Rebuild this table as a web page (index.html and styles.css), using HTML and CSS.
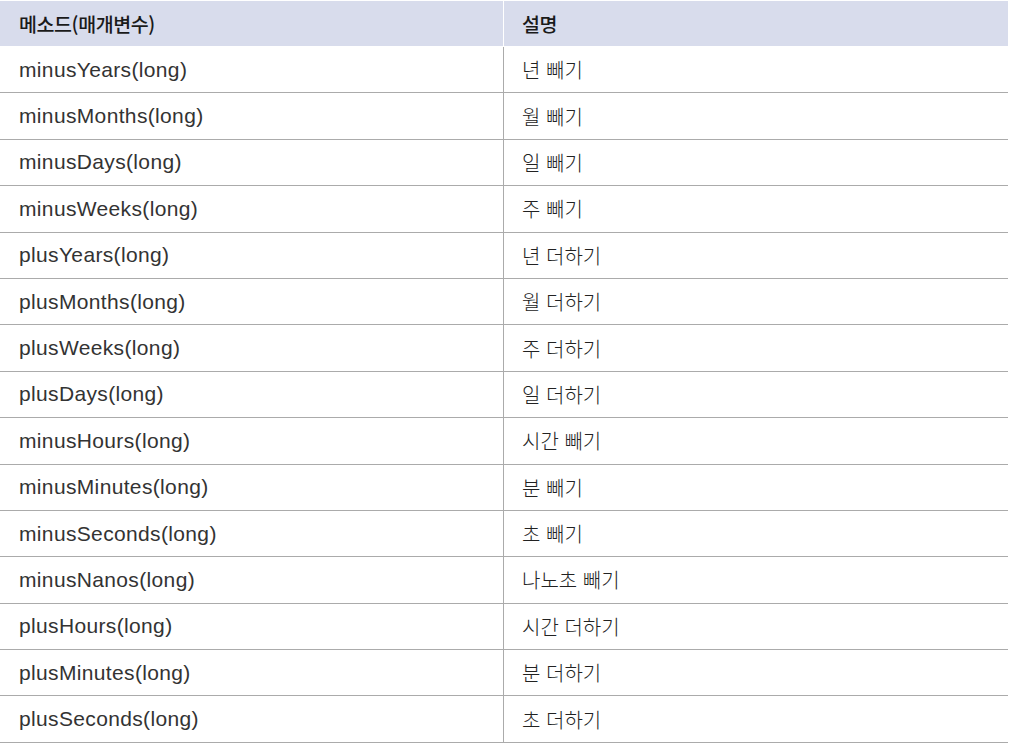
FILE: index.html
```html
<!DOCTYPE html>
<html lang="ko">
<head>
<meta charset="utf-8">
<link rel="stylesheet" href="styles.css">
</head>
<body>
<div class="table">
  <div class="row head"><div class="cell c1">메소드(매개변수)</div><div class="cell c2">설명</div></div>
  <div class="row"><div class="cell c1">minusYears(long)</div><div class="cell c2">년 빼기</div></div>
  <div class="row"><div class="cell c1">minusMonths(long)</div><div class="cell c2">월 빼기</div></div>
  <div class="row"><div class="cell c1">minusDays(long)</div><div class="cell c2">일 빼기</div></div>
  <div class="row"><div class="cell c1">minusWeeks(long)</div><div class="cell c2">주 빼기</div></div>
  <div class="row"><div class="cell c1">plusYears(long)</div><div class="cell c2">년 더하기</div></div>
  <div class="row"><div class="cell c1">plusMonths(long)</div><div class="cell c2">월 더하기</div></div>
  <div class="row"><div class="cell c1">plusWeeks(long)</div><div class="cell c2">주 더하기</div></div>
  <div class="row"><div class="cell c1">plusDays(long)</div><div class="cell c2">일 더하기</div></div>
  <div class="row"><div class="cell c1">minusHours(long)</div><div class="cell c2">시간 빼기</div></div>
  <div class="row"><div class="cell c1">minusMinutes(long)</div><div class="cell c2">분 빼기</div></div>
  <div class="row"><div class="cell c1">minusSeconds(long)</div><div class="cell c2">초 빼기</div></div>
  <div class="row"><div class="cell c1">minusNanos(long)</div><div class="cell c2">나노초 빼기</div></div>
  <div class="row"><div class="cell c1">plusHours(long)</div><div class="cell c2">시간 더하기</div></div>
  <div class="row"><div class="cell c1">plusMinutes(long)</div><div class="cell c2">분 더하기</div></div>
  <div class="row"><div class="cell c1">plusSeconds(long)</div><div class="cell c2">초 더하기</div></div>
</div>
</body>
</html>
```
FILE: styles.css
```css
html, body {
  margin: 0;
  padding: 0;
  background: #ffffff;
}
body {
  font-family: "Liberation Sans", "Noto Sans CJK KR", sans-serif;
  color: #333333;
}
.table {
  width: 1008px;
  margin-top: 1px;
  display: flex;
  flex-direction: column;
}
.row {
  display: grid;
  grid-template-columns: 504px 1fr;
  height: 46.4px;
  box-sizing: border-box;
  border-bottom: 1.5px solid #ababab;
}
.row.head {
  height: 46px;
  border-bottom: 1px solid #ffffff;
  background: #d8dcec;
}
.cell {
  display: flex;
  align-items: center;
  padding-left: 19px;
  font-size: 21px;
  letter-spacing: 0.35px;
  white-space: nowrap;
}
.c1 {
  border-right: 1.5px solid #ababab;
}
.c2 {
  padding-left: 18px;
  font-family: "Noto Sans CJK KR", sans-serif;
  font-weight: 300;
  font-size: 20px;
  letter-spacing: 0;
  color: #222222;
}
.head .cell {
  font-family: "Noto Sans CJK KR", sans-serif;
  font-weight: 500;
  font-size: 19.5px;
  letter-spacing: -0.4px;
  color: #1a1a1a;
}
.head .c1 {
  border-right: 1px solid #ffffff;
}
```
